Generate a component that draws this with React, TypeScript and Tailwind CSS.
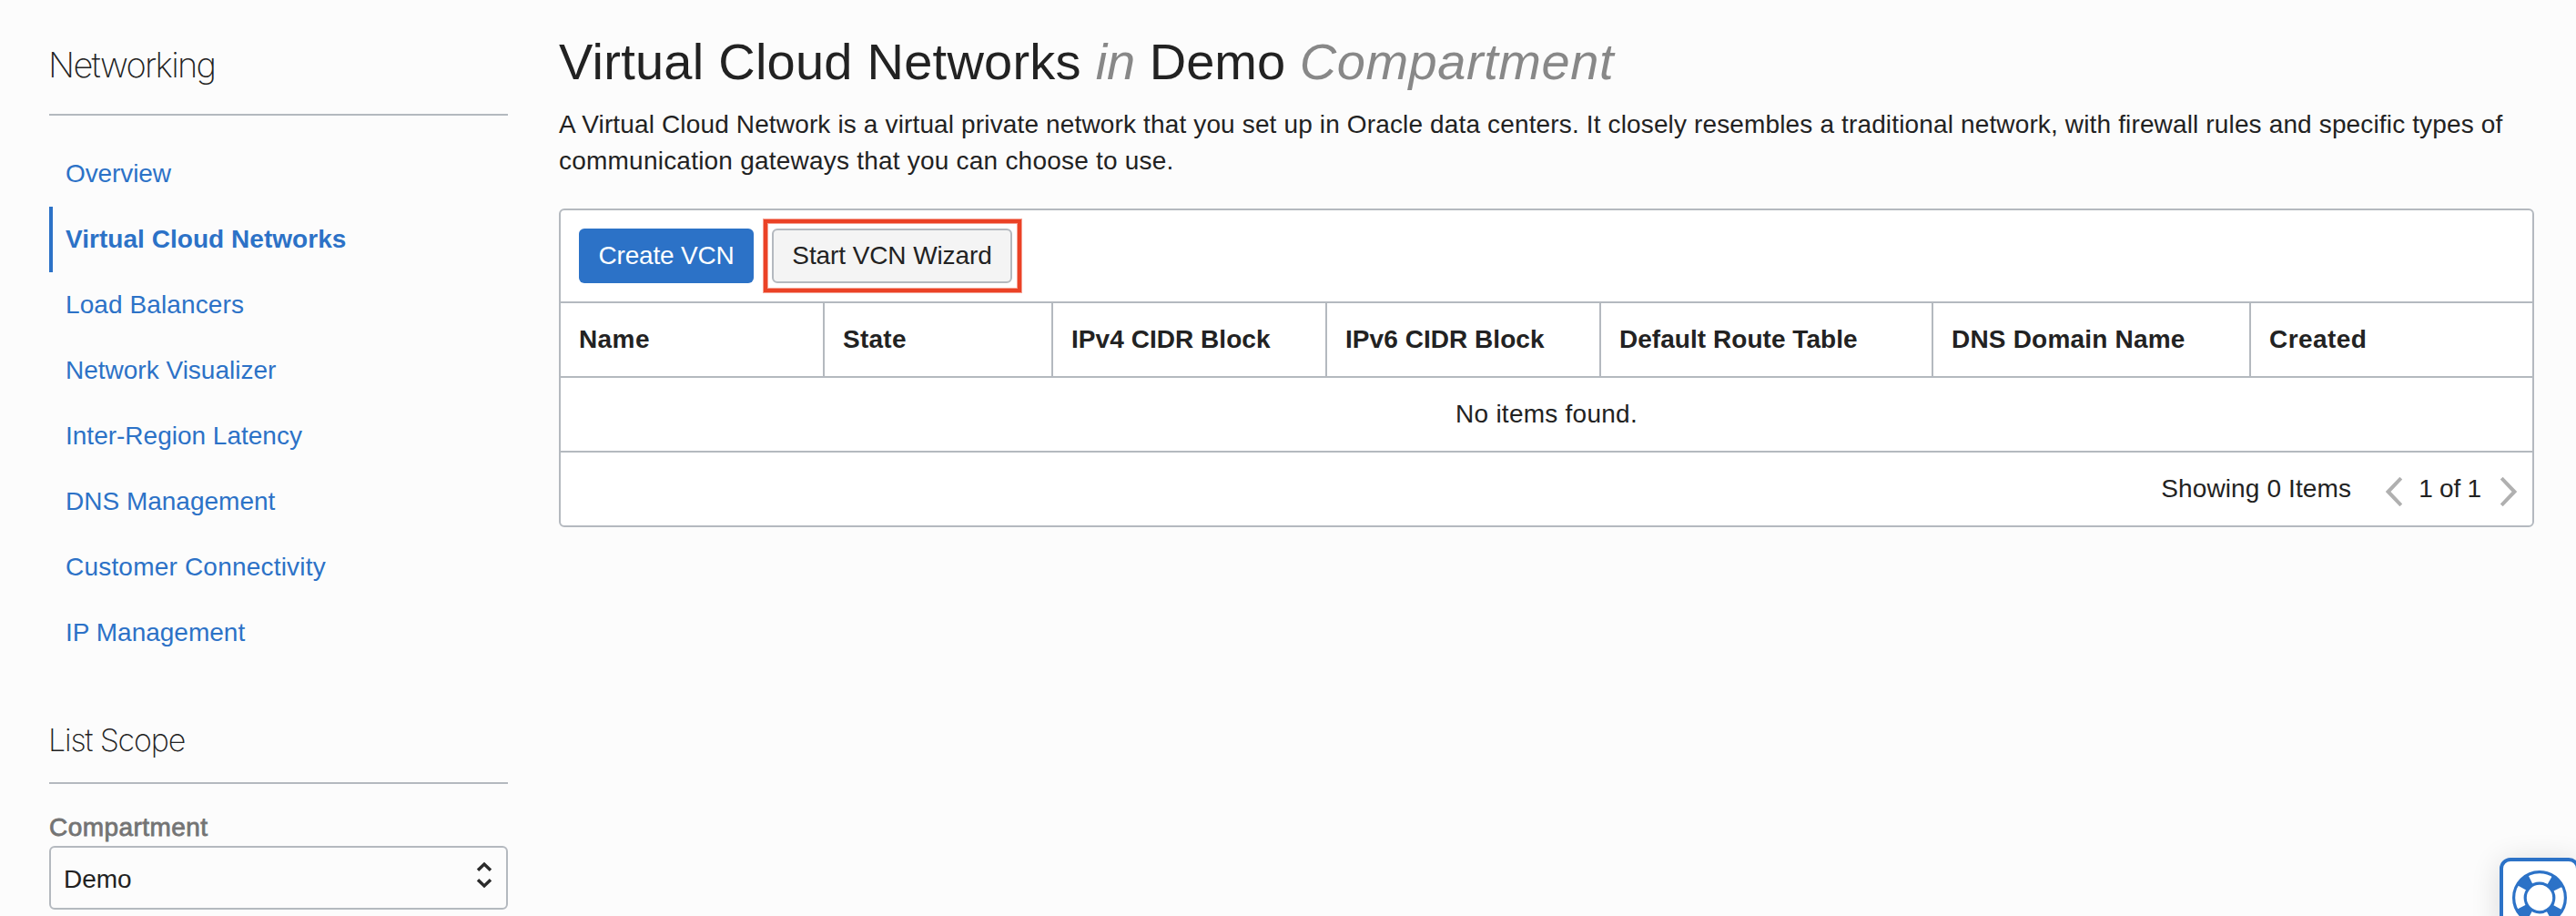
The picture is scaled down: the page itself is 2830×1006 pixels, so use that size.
import React from "react";

const navItems = [
  { label: "Overview", tracking: "tracking-[-0.1px]" },
  { label: "Virtual Cloud Networks", tracking: "tracking-[0.04px]", active: true },
  { label: "Load Balancers", tracking: "tracking-[0.1px]" },
  { label: "Network Visualizer", tracking: "tracking-normal" },
  { label: "Inter-Region Latency", tracking: "tracking-normal" },
  { label: "DNS Management", tracking: "tracking-normal" },
  { label: "Customer Connectivity", tracking: "tracking-[0.2px]" },
  { label: "IP Management", tracking: "tracking-normal" },
];

const columns = [
  { label: "Name", tracking: "tracking-[0.4px]" },
  { label: "State", tracking: "tracking-[0.25px]" },
  { label: "IPv4 CIDR Block", tracking: "tracking-[0.05px]" },
  { label: "IPv6 CIDR Block", tracking: "tracking-[0.05px]" },
  { label: "Default Route Table", tracking: "tracking-[0.04px]" },
  { label: "DNS Domain Name", tracking: "tracking-[0.2px]" },
  { label: "Created", tracking: "tracking-[0.45px]" },
];

function SelectArrows() {
  return (
    <svg className="-mt-1.5 mr-[14px] h-8 w-5" viewBox="0 0 20 32" fill="none" stroke="#2b2b2b" strokeWidth="3.4">
      <path d="M3 10.8 L10 4 L17 10.8" />
      <path d="M3 21.2 L10 28 L17 21.2" />
    </svg>
  );
}

function Chevron({ flipped = false }: { flipped?: boolean }) {
  return (
    <svg
      className={flipped ? "h-8 w-[18px] rotate-180" : "h-8 w-[18px]"}
      viewBox="0 0 18 32"
      fill="none"
      stroke="#b0b0b0"
      strokeWidth="4"
    >
      <path d="M16.8 1.2 L2.6 16 L16.8 30.8" />
    </svg>
  );
}

function Lifebuoy() {
  return (
    <svg className="h-[60px] w-[60px]" viewBox="0 0 60 60" fill="none">
      <circle cx="30" cy="30" r="28.4" stroke="#2c72c7" strokeWidth="3.2" />
      <circle
        cx="30"
        cy="30"
        r="22"
        stroke="#2c72c7"
        strokeWidth="12"
        strokeDasharray="12.8 21.76"
        strokeDashoffset="-10.88"
      />
      <circle cx="30" cy="30" r="15.8" stroke="#2c72c7" strokeWidth="3.2" fill="#fff" />
    </svg>
  );
}

function Sidebar() {
  return (
    <aside className="w-[504px] shrink-0 pt-[47px]">
      <h2 className="border-b-2 border-[#b4b9bf] pb-[30px] font-['Inter',sans-serif] text-[38px] leading-[48px] font-extralight tracking-[-1.7px]">
        <span className="-ml-px">Networking</span>
      </h2>
      <nav className="mt-7 flex flex-col text-[#2c72c7]">
        {navItems.map((item) => (
          <a
            key={item.label}
            className={`flex h-[72px] items-center border-l-4 pl-3.5 ${item.tracking} ${
              item.active ? "border-[#2c72c7] font-bold" : "border-transparent"
            }`}
          >
            {item.label}
          </a>
        ))}
      </nav>
      <h3 className="mt-[62px] border-b-2 border-[#b4b9bf] pb-[26px] font-['Inter',sans-serif] text-[34px] leading-10 font-extralight tracking-[-1.2px]">
        <span className="-ml-px">List Scope</span>
      </h3>
      <div className="mt-8 leading-8 tracking-[0.45px] text-[#747474] [-webkit-text-stroke:0.8px_#747474]">
        Compartment
      </div>
      <div className="mt-1 flex h-[70px] items-center justify-between rounded-md border-2 border-[#b4b9bf] pl-3.5">
        <span className="pt-1">Demo</span>
        <SelectArrows />
      </div>
    </aside>
  );
}

export default function App() {
  return (
    <div className="relative flex h-[1006px] w-[2830px] overflow-hidden bg-[#fcfcfc] pl-[54px] font-['Liberation_Sans',Arial,sans-serif] text-[28px] text-[#222]">
      <Sidebar />
      <main className="ml-14 w-[2170px] pt-9">
        <h1 className="flex text-[56px] leading-[64px] whitespace-pre">
          <span className="tracking-[0.24px]">Virtual Cloud Networks </span>
          <i className="text-[#888]">in </i>
          <span>Demo </span>
          <i className="tracking-[0.55px] text-[#888]">Compartment</i>
        </h1>
        <p className="mt-[17px] leading-10 whitespace-nowrap">
          <span className="tracking-[0.144px]">
            A Virtual Cloud Network is a virtual private network that you set up in Oracle data centers. It closely
            resembles a traditional network, with firewall rules and specific types of
          </span>
          <br />
          <span className="tracking-[0.22px]">communication gateways that you can choose to use.</span>
        </p>

        <section className="mt-8 rounded-md border-2 border-[#b4b9bf] bg-white">
          <div className="flex h-[102px] items-center gap-5 border-b-2 border-[#b4b9bf] px-5">
            <button className="h-[60px] w-48 rounded-md bg-[#2c72c7] tracking-[-0.2px] text-white">Create VCN</button>
            <div className="relative">
              <button className="h-[60px] w-[264px] rounded-md border-2 border-[#b4b9bf] bg-[#f4f4f4] tracking-[-0.1px]">
                Start VCN Wizard
              </button>
              <div className="pointer-events-none absolute -top-2.5 -left-[9px] h-20 w-[283px] border-4 border-[#eb4226] shadow-[0_0_0_1px_#eb422680,inset_0_0_0_1px_#eb422680]" />
            </div>
          </div>
          <div className="grid h-[82px] grid-cols-[290px_251px_301px_301px_365px_349px_1fr] border-b-2 border-[#b4b9bf] font-bold">
            {columns.map((column) => (
              <div
                key={column.label}
                className={`flex items-center border-r-2 border-[#b4b9bf] pl-5 last:border-r-0 ${column.tracking}`}
              >
                {column.label}
              </div>
            ))}
          </div>
          <div className="flex h-[82px] items-center justify-center border-b-2 border-[#b4b9bf] tracking-[0.25px]">
            No items found.
          </div>
          <div className="flex h-20 items-center justify-end pr-[17px]">
            <span className="mr-[38px] tracking-[0.13px]">Showing 0 Items</span>
            <span className="flex items-center pt-1.5">
              <Chevron />
            </span>
            <span className="mr-[21px] ml-[18px] tracking-[-0.2px]">1 of 1</span>
            <span className="flex items-center pt-1.5">
              <Chevron flipped />
            </span>
          </div>
        </section>
      </main>

      <button className="absolute top-[942px] left-[2746px] flex h-[88px] w-[88px] items-center justify-center rounded-xl border-4 border-[#2c72c7] bg-white shadow-[0_4px_32px_rgba(0,0,0,0.14)]">
        <Lifebuoy />
      </button>
    </div>
  );
}
